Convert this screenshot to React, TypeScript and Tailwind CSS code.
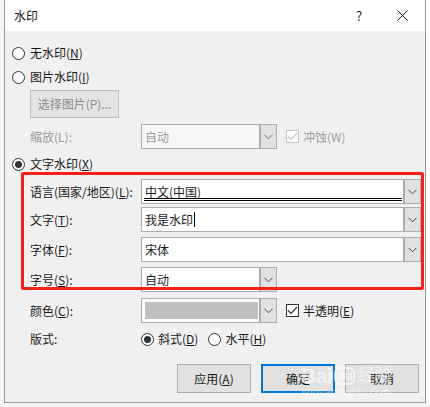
import type { ReactNode } from 'react'

const font = { fontFamily: '"Noto Sans CJK SC", "Microsoft YaHei", sans-serif' }

function Chevron({ disabled = false }: { disabled?: boolean }) {
  return (
    <svg width="9" height="6" viewBox="0 0 9 6" className="block">
      <path d="M0.5 0.8 L4.5 4.8 L8.5 0.8" fill="none" stroke={disabled ? '#6d6d6d' : '#4a4a4a'} strokeWidth="1" />
    </svg>
  )
}

function Radio({ checked = false }: { checked?: boolean }) {
  return (
    <span className="flex h-[13px] w-[13px] shrink-0 items-center justify-center rounded-full border border-[#333] bg-white">
      {checked && <span className="h-[7px] w-[7px] rounded-full bg-[#333]" />}
    </span>
  )
}

function Check({ checked = false, disabled = false }: { checked?: boolean; disabled?: boolean }) {
  const c = disabled ? '#c4c4c4' : '#333'
  return (
    <span
      className={`flex h-[13px] w-[13px] shrink-0 items-center justify-center border bg-white ${disabled ? 'border-[#c4c4c4]' : 'border-[#333]'}`}
    >
      {checked && (
        <svg width="11" height="9" viewBox="0 0 11 9">
          <path d="M1 4.5 L4 7.5 L10 1" fill="none" stroke={c} strokeWidth="1.2" />
        </svg>
      )}
    </span>
  )
}

function Select({ wide = false, disabled = false, children }: { wide?: boolean; disabled?: boolean; children?: ReactNode }) {
  return (
    <div
      className={`flex h-[25px] shrink-0 border border-[#adadad] ${wide ? 'w-[280px]' : 'w-[136px]'} ${disabled ? 'bg-[#f7f7f7]' : 'bg-white'}`}
    >
      <div className="relative flex min-w-0 flex-1 items-center pl-[3px]">{children}</div>
      <div className="flex w-[17px] items-center justify-center border-l-2 border-[#adadad] bg-[#e1e1e1]">
        <Chevron disabled={disabled} />
      </div>
    </div>
  )
}

function Label({ children, disabled = false }: { children: ReactNode; disabled?: boolean }) {
  return (
    <span className={`w-[111px] shrink-0 text-[12px] leading-none ${disabled ? 'text-[#9a9a9a]' : 'text-[#1a1a1a]'}`}>
      {children}
    </span>
  )
}

function Btn({ children, primary = false }: { children: ReactNode; primary?: boolean }) {
  return (
    <div
      className={`flex h-[29px] w-[74px] items-center justify-center bg-[#e1e1e1] text-[12px] text-[#1a1a1a] ${primary ? 'border-2 border-[#0078d7]' : 'border border-[#adadad]'}`}
    >
      {children}
    </div>
  )
}

export default function App() {
  return (
    <div className="relative h-[407px] w-[430px] overflow-hidden bg-[#f4f4f4]" style={font}>
      {/* document behind the dialog, right edge */}
      <div className="absolute right-0 top-0 h-[402px] w-[4px] bg-white" />

      <div className="relative ml-[4px] h-[403px] w-[422px] border-x border-b border-[#9a9a9a] bg-[#f0f0f0]">
        {/* title bar */}
        <div className="flex h-[31px] items-center bg-white pl-[9px] text-[12px] text-[#1a1a1a]">
          <span className="flex-1">水印</span>
          <span className="w-[14px] text-[13px]">?</span>
          <span className="ml-[27px] mr-[17px]">
            <svg width="11" height="11" viewBox="0 0 11 11" className="block">
              <path d="M0.5 0.5 L10.5 10.5 M10.5 0.5 L0.5 10.5" stroke="#1a1a1a" strokeWidth="1" />
            </svg>
          </span>
        </div>

        <div className="flex flex-col pl-[7px] text-[12px] text-[#1a1a1a]">
          <div className="mt-[15px] flex h-[14px] items-center gap-[5px]">
            <Radio />
            <span>
              无水印(<u>N</u>)
            </span>
          </div>
          <div className="mt-[10px] flex h-[14px] items-center gap-[5px]">
            <Radio />
            <span>
              图片水印(<u>I</u>)
            </span>
          </div>
          <div className="ml-[18px] mt-[6px] flex h-[28px] w-[89px] items-center justify-center border border-[#bfbfbf] bg-[#e3e3e3] text-[#8c8c8c]">
            选择图片(P)...
          </div>
          <div className="ml-[18px] mt-[6px] flex items-center">
            <Label disabled>缩放(L):</Label>
            <Select disabled>
              <span className="text-[#9a9a9a]">自动</span>
            </Select>
            <div className="ml-[9px] flex items-center gap-[4px] text-[#a0a0a0]">
              <Check checked disabled />
              <span>冲蚀(W)</span>
            </div>
          </div>
          <div className="mt-[8px] flex h-[14px] items-center gap-[5px]">
            <Radio checked />
            <span>
              文字水印(<u>X</u>)
            </span>
          </div>

          <div className="ml-[18px] mt-[8px] flex items-center">
            <Label>
              语言(国家/地区)(<u>L</u>):
            </Label>
            <Select wide>
              <span>中文(中国)</span>
              <span className="absolute bottom-[2px] left-[2px] right-[1px] h-[3px] border-y border-black" />
            </Select>
          </div>
          <div className="ml-[18px] mt-[3px] flex items-center">
            <Label>
              文字(<u>T</u>):
            </Label>
            <Select wide>
              <span>我是水印</span>
              <span className="ml-[1px] h-[15px] w-[1px] bg-black" />
            </Select>
          </div>
          <div className="ml-[18px] mt-[5px] flex items-center">
            <Label>
              字体(<u>F</u>):
            </Label>
            <Select wide>
              <span>宋体</span>
            </Select>
          </div>
          <div className="ml-[18px] mt-[5px] flex items-center">
            <Label>
              字号(<u>S</u>):
            </Label>
            <Select>
              <span>自动</span>
            </Select>
          </div>
          <div className="ml-[18px] mt-[6px] flex items-center">
            <Label>
              颜色(<u>C</u>):
            </Label>
            <Select>
              <span className="my-[3px] mr-[1px] h-[17px] flex-1 bg-[#bfbfbf]" />
            </Select>
            <div className="ml-[9px] flex items-center gap-[4px]">
              <Check checked />
              <span>
                半透明(<u>E</u>)
              </span>
            </div>
          </div>
          <div className="ml-[18px] mt-[9px] flex h-[14px] items-center">
            <Label>版式:</Label>
            <div className="flex items-center gap-[4px]">
              <Radio checked />
              <span>
                斜式(<u>D</u>)
              </span>
            </div>
            <div className="ml-[10px] flex items-center gap-[4px]">
              <Radio />
              <span>
                水平(<u>H</u>)
              </span>
            </div>
          </div>

          <div className="mt-[18px] flex justify-end gap-[10px] pr-[6px]">
            <Btn>
              应用(<u>A</u>)
            </Btn>
            <Btn primary>确定</Btn>
            <Btn>取消</Btn>
          </div>
        </div>

        {/* red annotation frame */}
        <div className="pointer-events-none absolute left-[16px] top-[172px] h-[118px] w-[403px] rounded-[2px] border-[3px] border-[#f4231a]" />

        {/* site watermark */}
        <div
          className="pointer-events-none absolute left-[296px] top-[365px] flex flex-col items-center text-white/60"
          style={{ fontFamily: 'Arial, "Liberation Sans", "Noto Sans CJK SC", sans-serif' }}
        >
          <div className="flex items-center text-[21px] font-bold leading-none tracking-tight">
            <span>Bai</span>
            <span className="ml-[2px] rounded-[6px] border-2 border-white/60 px-[1px] text-[13px] leading-[14px]">du</span>
            <span className="ml-[3px] text-[17px] font-normal">经验</span>
          </div>
          <span className="mt-[1px] text-[11px] leading-none text-white/50">jingyan.baidu.com</span>
        </div>
      </div>
    </div>
  )
}
